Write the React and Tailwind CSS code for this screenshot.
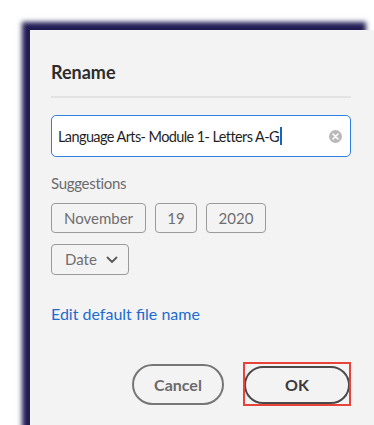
import React from 'react';

const Chip = ({ children, className = '' }) => (
    <div className={`h-[30px] flex items-center justify-center rounded-[4px] border border-[#9a9a9a] text-[15px] text-[#6e6e6e] ${className}`}>
        {children}
    </div>
);

const App = () => {
    return (
        <div className="h-[425px] w-[374px] overflow-hidden bg-white pl-[30px] pt-[30px] font-['Lato',sans-serif]">
            {/* Dialog */}
            <div className="h-[420px] w-[344px] bg-[#f4f3f4] pl-[21px] pr-[23px] pt-[31px] shadow-[-8px_-8px_5px_#221c55]">
                {/* Title */}
                <h1 className="text-[18px] font-bold leading-[22px] text-[#2c2c2c]">Rename</h1>
                <div className="mt-[13px] h-[2px] w-[300px] bg-[#e2e2e2]" />

                {/* Input */}
                <div className="mt-[17px] flex h-[42px] w-[300px] items-center rounded-[5px] border border-[#2d7fe0] bg-white pl-[6px] pr-[8px]">
                    <span className="flex-1 text-[14.5px] tracking-[-0.6px] text-[#1f1f1f]">
                        Language Arts- Module 1- Letters A-G
                        <span className="ml-[1px] inline-block h-[18px] w-[2px] translate-y-[3px] bg-[#1565c0]" />
                    </span>
                    <span className="flex h-[13px] w-[13px] items-center justify-center rounded-full bg-[#b9b9b9]">
                        <svg width="7" height="7" viewBox="0 0 7 7">
                            <path d="M1 1 L6 6 M6 1 L1 6" stroke="white" strokeWidth="1.6" strokeLinecap="round" />
                        </svg>
                    </span>
                </div>

                {/* Suggestions */}
                <p className="mt-[16px] text-[15px] leading-[20px] tracking-[-0.3px] text-[#6b6b6b]">Suggestions</p>
                <div className="mt-[10px] flex gap-[9px]">
                    <Chip className="w-[95px]">November</Chip>
                    <Chip className="w-[42px]">19</Chip>
                    <Chip className="w-[60px]">2020</Chip>
                </div>
                <div className="mt-[11px] flex h-[31px] w-[78px] items-center justify-between rounded-[4px] border border-[#9a9a9a] pl-[13px] pr-[10px] text-[15px] text-[#6e6e6e]">
                    <span>Date</span>
                    <svg width="12" height="8" viewBox="0 0 12 8">
                        <path d="M1.5 1.5 L6 6 L10.5 1.5" fill="none" stroke="#5a5a5a" strokeWidth="1.8" strokeLinecap="round" strokeLinejoin="round" />
                    </svg>
                </div>

                {/* Link */}
                <p className="mt-[28px] text-[16px] leading-[22px] text-[#1b6bd0]">Edit default file name</p>

                {/* Actions */}
                <div className="mt-[39px] flex justify-end gap-[20px] pr-[1px]">
                    <button className="h-[41px] w-[92px] rounded-full border-2 border-[#767676] text-[16px] font-bold text-[#6a6a6a]">
                        Cancel
                    </button>
                    <div className="relative mt-[2px]">
                        <button className="h-[38px] w-[106px] rounded-full border-2 border-[#4a4a4a] text-[16px] font-bold text-[#3a3a3a]">
                            OK
                        </button>
                        <div className="absolute -left-[1px] -top-[4px] h-[44px] w-[108px] border-2 border-[#e8433a]" />
                    </div>
                </div>
            </div>
        </div>
    );
};

export default App;
